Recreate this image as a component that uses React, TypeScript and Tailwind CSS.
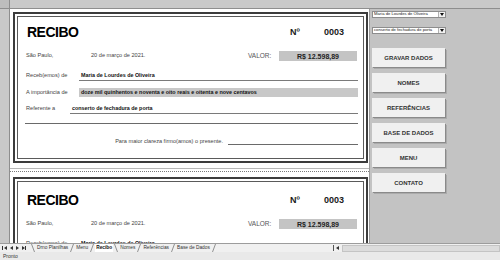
import React from "react";

const NOMES = "Maria de Lourdes de Oliveira";
const REFERENCIA = "conserto de fechadura de porta";

type ReciboProps = { topPad: string };

/** Um recibo emoldurado, como aparece na visualização de página. */
function Recibo({ topPad }: ReciboProps) {
  return (
    <div className="h-[151px] w-[355px] shrink-0 border-2 border-[#3c3c3c] bg-white p-[2px]">
      <div className={`flex h-full flex-col border border-[#5a5a5a] pl-[8px] pr-[5px] ${topPad}`}>
        <div className="flex h-[20px] items-center">
          <span className="w-[264px] pl-[1px] text-[14px] font-bold leading-none tracking-[-0.5px] text-black">
            RECIBO
          </span>
          <span className="w-[34px] text-[9px] font-bold leading-none text-[#1a1a1a]">Nº</span>
          <span className="text-[9px] font-bold leading-none text-[#1a1a1a]">0003</span>
        </div>

        <div className="mt-[4px] flex h-[20px] items-center text-[5.6px] leading-none text-[#444]">
          <span className="w-[65px]">São Paulo,</span>
          <span className="w-[157px]">20 de março de 2021.</span>
          <span className="w-[31px] text-[6.5px] text-[#555]">VALOR:</span>
          <span className="flex h-[10px] w-[78px] items-center justify-center bg-[#c4c4c4] text-[7px] font-bold text-[#222]">
            R$ 12.598,89
          </span>
        </div>

        <div className="mt-[4px] flex h-[11px] items-end text-[5.6px] leading-none">
          <span className="w-[53px] pb-[2px] text-[#444]">Receb(emos) de</span>
          <span className="flex h-full flex-1 items-end border-b border-[#7a7a7a] pb-[2px] pl-[2px] text-[5.4px] font-bold text-[#111]">
            {NOMES}
          </span>
        </div>

        <div className="mt-[7px] flex h-[9px] items-center text-[5.6px] leading-none">
          <span className="w-[53px] text-[#444]">A importância de</span>
          <span className="flex h-full flex-1 items-center bg-[#c8c8c8] pl-[2px] text-[5.4px] font-bold text-[#111]">
            doze mil quinhentos e noventa e oito reais e oitenta e nove centavos
          </span>
        </div>

        <div className="mt-[6px] flex h-[11px] items-end text-[5.6px] leading-none">
          <span className="w-[44px] pb-[2px] text-[#444]">Referente a</span>
          <span className="flex h-full flex-1 items-end border-b border-[#7a7a7a] pb-[2px] pl-[2px] text-[5.4px] font-bold text-[#111]">
            {REFERENCIA}
          </span>
        </div>

        <div className="-ml-[1px] mt-[9px] h-px bg-[#6a6a6a]" />

        <div className="mt-[12px] flex h-[9px] items-end justify-end text-[5.6px] leading-none text-[#444]">
          <span>Para maior clareza firmo(amos) o presente.</span>
          <span className="ml-[5px] h-px w-[130px] bg-[#6a6a6a]" />
        </div>
      </div>
    </div>
  );
}

function Seta({ dir }: { dir: "down" | "left" | "right" }) {
  if (dir === "down") {
    return (
      <svg width="4" height="3" viewBox="0 0 4 3">
        <path d="M0 0H4L2 3Z" fill="#111" />
      </svg>
    );
  }
  return (
    <svg width="3" height="4" viewBox="0 0 3 4">
      <path d={dir === "left" ? "M3 0V4L0 2Z" : "M0 0V4L3 2Z"} fill="#333" />
    </svg>
  );
}

// traço inclinado entre as abas
function Barra({ invertida = false }: { invertida?: boolean }) {
  return (
    <svg width="4" height="8" viewBox="0 0 4 8" className="mx-[1px] shrink-0">
      <path d={invertida ? "M0.5 0L3.5 8" : "M3.5 0L0.5 8"} stroke="#777" strokeWidth="0.8" fill="none" />
    </svg>
  );
}

function Combo({ value }: { value: string }) {
  return (
    <div className="flex h-[7px] w-[74px] items-center border border-[#8d8d8d] bg-white">
      <span className="flex-1 overflow-hidden whitespace-nowrap pl-[1px] text-[4.2px] leading-none text-[#222]">
        {value}
      </span>
      <span className="flex h-full w-[7px] items-center justify-center border-l border-[#b0b0b0] bg-[#f2f2f2]">
        <Seta dir="down" />
      </span>
    </div>
  );
}

const BOTOES = ["GRAVAR DADOS", "NOMES", "REFERÊNCIAS", "BASE DE DADOS", "MENU", "CONTATO"];

const ABAS = ["Drno Planilhas", "Menu", "Recibo", "Nomes", "Referências", "Base de Dados"];

export default function App() {
  return (
    <div className="flex h-[260px] w-[500px] flex-col overflow-hidden bg-[#c3c3c3] font-['Liberation_Sans',Arial,sans-serif]">
      {/* cabeçalho de colunas */}
      <div className="flex h-[9px] shrink-0 border-b border-[#8e8e8e] bg-[#c9c9c9]">
        <div className="w-[10px] border-r border-[#8e8e8e] bg-[#bdbdbd]" />
        <div className="flex-1" />
      </div>

      <div className="flex h-[234px] shrink-0">
        {/* cabeçalho de linhas */}
        <div className="w-[10px] border-r border-[#8e8e8e] bg-[#c9c9c9]" />

        <div className="flex h-full w-[359px] flex-col overflow-hidden bg-white pl-[3px] pt-[3px]">
          <Recibo topPad="pt-[5px]" />
          <div className="-ml-[3px] mt-[5px] h-px shrink-0 bg-[#b8b8b8]" />
          <div className="-ml-[3px] mt-[2px] shrink-0 border-t border-dotted border-[#7a7a7a]" />
          <div className="mt-[5px]">
            <Recibo topPad="pt-[8px]" />
          </div>
        </div>

        <div className="flex flex-1 flex-col border-l border-[#9a9a9a] bg-[#c3c3c3] pl-[2px] pt-[2px]">
          <Combo value={NOMES} />
          <div className="mt-[9px]">
            <Combo value={REFERENCIA} />
          </div>
          <div className="mt-[14px] flex flex-col gap-[6px]">
            {BOTOES.map((b) => (
              <button
                key={b}
                type="button"
                className="flex h-[19px] w-[73px] items-center justify-center bg-[#f0f0f0] text-[6px] font-bold leading-none text-[#333] shadow-[1px_1px_0_#8a8a8a,2px_2px_0_#ababab]"
              >
                {b}
              </button>
            ))}
          </div>
        </div>
      </div>

      {/* abas das planilhas */}
      <div className="flex h-[9px] shrink-0 items-center border-t border-[#9c9c9c] bg-[#f0f0f0] text-[4.8px] leading-none text-[#333]">
        <div className="flex w-[30px] items-center gap-[3px] pl-[2px]">
          <span className="flex items-center">
            <span className="mr-[0.5px] h-[4px] w-px bg-[#333]" />
            <Seta dir="left" />
          </span>
          <Seta dir="left" />
          <Seta dir="right" />
          <span className="flex items-center">
            <Seta dir="right" />
            <span className="ml-[0.5px] h-[4px] w-px bg-[#333]" />
          </span>
        </div>
        <Barra invertida />
        {ABAS.map((aba) => (
          <React.Fragment key={aba}>
            <span
              className={
                aba === "Recibo"
                  ? "flex h-full items-center bg-white px-[1px] font-bold text-[#111]"
                  : "flex h-full items-center px-[1px]"
              }
            >
              {aba}
            </span>
            <Barra invertida={aba === "Recibo"} />
          </React.Fragment>
        ))}
        <div className="ml-auto flex h-full items-center">
          <span className="h-[6px] w-px bg-[#555]" />
          <span className="ml-[2px] mr-[3px] flex items-center">
            <Seta dir="left" />
          </span>
          <span className="h-[7px] w-[158px] border border-[#c4c4c4] bg-[#dcdcdc]" />
        </div>
      </div>

      {/* barra de status */}
      <div className="flex h-[8px] shrink-0 items-center bg-[#e9e9e9] pl-[3px] text-[5px] leading-none text-[#333]">
        Pronto
      </div>
    </div>
  );
}
